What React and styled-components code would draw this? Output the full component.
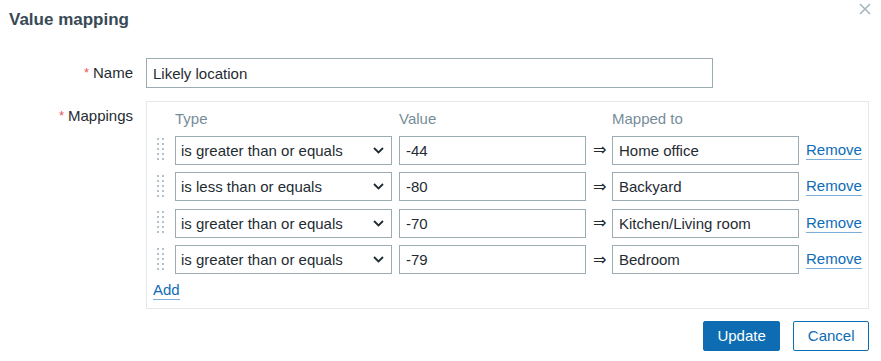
import React from "react";
import styled, { createGlobalStyle } from "styled-components";

const Global = createGlobalStyle`
  html, body { margin: 0; padding: 0; background: #ffffff; }
  body { font-family: "Liberation Sans", Arial, sans-serif; color: #1f2c33; }
  * { box-sizing: border-box; }
`;

const Dialog = styled.div`
  width: 881px;
  height: 361px;
  padding: 10px 12px 10px 9px;
  background: #fff;
`;

const Header = styled.div`
  display: flex;
  justify-content: space-between;
  align-items: flex-start;
`;

const Title = styled.h4`
  margin: 0;
  font-size: 17px;
  line-height: 20px;
  font-weight: bold;
  color: #384a56;
`;

const CloseButton = styled.button`
  margin: -8px -3px 0 0;
  padding: 0;
  border: 0;
  background: none;
  width: 14px;
  height: 14px;
  display: flex;
  align-items: center;
  justify-content: center;
  cursor: pointer;
`;

const Form = styled.div`
  margin-top: 28px;
  display: grid;
  grid-template-columns: 124px 1fr;
  column-gap: 13px;
  row-gap: 13px;
`;

const Label = styled.div`
  text-align: right;
  font-size: 15px;
  line-height: 18px;
  color: #1f2c33;
  align-self: ${(p) => (p.$top ? "start" : "center")};
  padding-top: ${(p) => (p.$top ? "6px" : "0")};
`;

const Star = styled.span`
  color: #e45959;
  font-size: 13px;
  margin-right: 4px;
  vertical-align: 1px;
`;

const TextInput = styled.input`
  width: ${(p) => p.$width || "100%"};
  height: ${(p) => p.$height || "29px"};
  border: 1px solid #9cacb5;
  border-radius: 0;
  padding: 0 6px;
  font-family: "Liberation Sans", Arial, sans-serif;
  font-size: 15px;
  color: #1f2c33;
  background: #fff;
  outline: none;
`;

const MappingsBox = styled.div`
  width: 723px;
  border: 1px solid #e3e8eb;
  padding: 8px 6px 8px 6px;
  display: flex;
  flex-direction: column;
  gap: 7.5px;
`;

const GridRow = styled.div`
  display: grid;
  grid-template-columns: 15px 217px 187px 12px 187px 1fr;
  column-gap: 7px;
  align-items: center;
  height: ${(p) => (p.$header ? "18px" : "29px")};
`;

const ColHead = styled.div`
  grid-column: ${(p) => p.$col};
  font-size: 15px;
  line-height: 18px;
  color: #768d99;
`;

const Handle = styled.svg`
  display: block;
  justify-self: center;
  margin-top: -1px;
`;

const Select = styled.div`
  height: 29px;
  border: 1px solid #9cacb5;
  padding: 0 7px 0 5px;
  display: flex;
  align-items: center;
  justify-content: space-between;
  font-size: 15px;
  color: #1f2c33;
  background: #fff;
  cursor: pointer;
`;

const Arrow = styled.span`
  font-family: "DejaVu Sans", "Liberation Sans", sans-serif;
  font-size: 16px;
  color: #1f2c33;
  text-align: center;
  line-height: 18px;
`;

const Link = styled.a`
  font-size: 15px;
  line-height: 18px;
  color: #0e6cb8;
  text-decoration: none;
  border-bottom: 1px solid rgba(14, 108, 184, 0.55);
  justify-self: start;
  cursor: pointer;
`;

const AddRow = styled.div`
  height: 18px;
  display: flex;
  align-items: center;
`;

const Footer = styled.div`
  margin-top: 12px;
  display: flex;
  justify-content: flex-end;
  gap: 13px;
`;

const Button = styled.button`
  height: 30px;
  padding: 0 13.5px;
  border-radius: 2px;
  font-family: "Liberation Sans", Arial, sans-serif;
  font-size: 15px;
  cursor: pointer;
  border: 1px solid #0e6cb2;
  background: ${(p) => (p.$primary ? "#0e6cb2" : "#ffffff")};
  color: ${(p) => (p.$primary ? "#ffffff" : "#0e6cb2")};
`;

const DragHandle = () => (
  <Handle width="7" height="23" viewBox="0 0 7 23">
    {[0, 5, 10, 15, 20].map((y) =>
      [0, 5].map((x) => (
        <rect key={`${x}-${y}`} x={x} y={y} width="2" height="2" fill="#b4c1c8" />
      ))
    )}
  </Handle>
);

const Chevron = () => (
  <svg width="11" height="7" viewBox="0 0 11 7">
    <path d="M1 1 L5.5 5.5 L10 1" fill="none" stroke="#1f2c33" strokeWidth="1.8" />
  </svg>
);

const rows = [
  { type: "is greater than or equals", value: "-44", to: "Home office" },
  { type: "is less than or equals", value: "-80", to: "Backyard" },
  { type: "is greater than or equals", value: "-70", to: "Kitchen/Living room" },
  { type: "is greater than or equals", value: "-79", to: "Bedroom" },
];

export default function App() {
  return (
    <>
      <Global />
      <Dialog>
        <Header>
          <Title>Value mapping</Title>
          <CloseButton aria-label="Close">
            <svg width="12" height="12" viewBox="0 0 12 12">
              <path d="M1 1 L11 11 M11 1 L1 11" stroke="#a7b6be" strokeWidth="1.6" />
            </svg>
          </CloseButton>
        </Header>
        <Form>
          <Label>
            <Star>*</Star>Name
          </Label>
          <TextInput $width="567px" $height="30px" defaultValue="Likely location" />
          <Label $top>
            <Star>*</Star>Mappings
          </Label>
          <MappingsBox>
            <GridRow $header>
              <ColHead $col={2}>Type</ColHead>
              <ColHead $col={3}>Value</ColHead>
              <ColHead $col={5}>Mapped to</ColHead>
            </GridRow>
            {rows.map((r, i) => (
              <GridRow key={i}>
                <DragHandle />
                <Select>
                  <span>{r.type}</span>
                  <Chevron />
                </Select>
                <TextInput defaultValue={r.value} />
                <Arrow>⇒</Arrow>
                <TextInput defaultValue={r.to} />
                <Link>Remove</Link>
              </GridRow>
            ))}
            <AddRow>
              <Link>Add</Link>
            </AddRow>
          </MappingsBox>
        </Form>
        <Footer>
          <Button $primary>Update</Button>
          <Button>Cancel</Button>
        </Footer>
      </Dialog>
    </>
  );
}
